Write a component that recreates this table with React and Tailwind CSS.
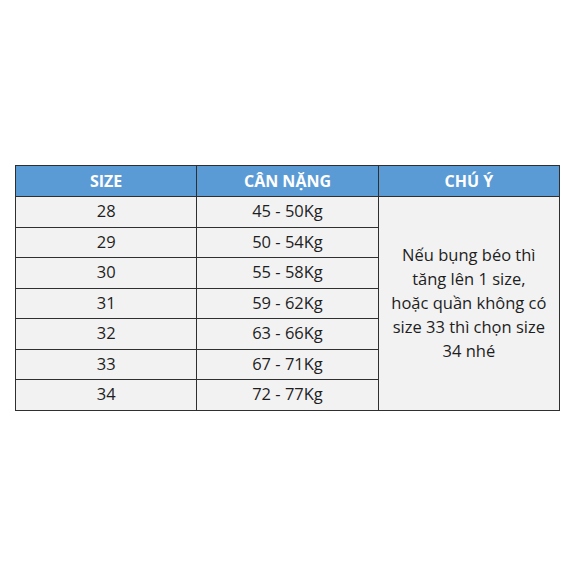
import React from 'react'

const rows = [
  ['28', '45 - 50Kg'],
  ['29', '50 - 54Kg'],
  ['30', '55 - 58Kg'],
  ['31', '59 - 62Kg'],
  ['32', '63 - 66Kg'],
  ['33', '67 - 71Kg'],
  ['34', '72 - 77Kg'],
]

function App() {
  return (
    <div className="w-[578px] h-[578px] bg-white pt-[165px] pl-[15px]" style={{ fontFamily: '"Open Sans", "Noto Sans", sans-serif' }}>
      <table className="w-[545px] border-collapse border border-[#2f2f2f] text-[#1e1e1e] text-[16.5px] table-fixed">
        <thead>
          <tr className="h-[31px] bg-[#5b9bd5] text-white font-bold text-[16px]">
            <th className="border border-[#2f2f2f] w-1/3 font-bold">SIZE</th>
            <th className="border border-[#2f2f2f] w-1/3 font-bold">CÂN NẶNG</th>
            <th className="border border-[#2f2f2f] w-1/3 font-bold">CHÚ Ý</th>
          </tr>
        </thead>
        <tbody className="bg-[#f2f2f2]">
          {rows.map(([size, weight], i) => (
            <tr key={size} className="h-[30.5px]">
              <td className="border border-[#2f2f2f] text-center">{size}</td>
              <td className="border border-[#2f2f2f] text-center">{weight}</td>
              {i === 0 && (
                <td rowSpan={7} className="border border-[#2f2f2f] text-center align-middle px-3 leading-[24px]">
                  Nếu bụng béo thì
                  <br />
                  tăng lên 1 size,
                  <br />
                  hoặc quần không có
                  <br />
                  size 33 thì chọn size
                  <br />
                  34 nhé
                </td>
              )}
            </tr>
          ))}
        </tbody>
      </table>
    </div>
  )
}

export default App
